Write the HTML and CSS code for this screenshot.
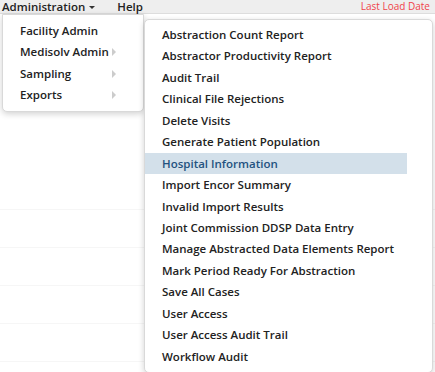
FILE: index.html
```html
<!DOCTYPE html>
<html>
<head>
<meta charset="utf-8">
<link rel="stylesheet" href="styles.css">
</head>
<body>
<div class="page">
  <header class="topbar">
    <nav class="nav">
      <span class="nav-item">Administration<span class="caret"></span></span>
      <span class="nav-item help">Help</span>
    </nav>
    <span class="last-load">Last Load Date</span>
  </header>
  <div class="content">
    <div class="row"></div>
    <div class="row"></div>
    <div class="row"></div>
    <div class="row"></div>
    <div class="row"></div>
  </div>

  <ul class="menu menu-main">
    <li class="item">Facility Admin</li>
    <li class="item sub">Medisolv Admin<span class="arrow"></span></li>
    <li class="item sub">Sampling<span class="arrow"></span></li>
    <li class="item sub">Exports<span class="arrow"></span></li>
  </ul>

  <ul class="menu menu-sub">
    <li class="item">Abstraction Count Report</li>
    <li class="item">Abstractor Productivity Report</li>
    <li class="item">Audit Trail</li>
    <li class="item">Clinical File Rejections</li>
    <li class="item">Delete Visits</li>
    <li class="item">Generate Patient Population</li>
    <li class="item active">Hospital Information</li>
    <li class="item">Import Encor Summary</li>
    <li class="item">Invalid Import Results</li>
    <li class="item">Joint Commission DDSP Data Entry</li>
    <li class="item">Manage Abstracted Data Elements Report</li>
    <li class="item">Mark Period Ready For Abstraction</li>
    <li class="item">Save All Cases</li>
    <li class="item">User Access</li>
    <li class="item">User Access Audit Trail</li>
    <li class="item">Workflow Audit</li>
  </ul>
</div>
</body>
</html>
```
FILE: styles.css
```css
html, body {
  margin: 0;
  padding: 0;
  background: #ffffff;
}
body {
  font-family: "Open Sans", "Liberation Sans", sans-serif;
  color: #333333;
  width: 435px;
  height: 372px;
  overflow: hidden;
}
.page {
  position: relative;
  width: 435px;
  height: 372px;
  overflow: hidden;
}
.topbar {
  height: 13px;
  background: #eeeeee;
  border-bottom: 1px solid #dddddd;
  display: flex;
  justify-content: space-between;
  align-items: flex-start;
}
.nav {
  display: flex;
  padding-left: 2px;
}
.nav-item {
  font-size: 11.5px;
  line-height: 13px;
  font-weight: 600;
  color: #222222;
  display: flex;
  align-items: center;
}
.caret {
  width: 0;
  height: 0;
  border-left: 3px solid transparent;
  border-right: 3px solid transparent;
  border-top: 3px solid #333;
  margin-left: 4px;
  margin-top: 2px;
}
.help {
  margin-left: 22px;
}
.last-load {
  font-size: 10px;
  line-height: 13px;
  color: #f0424a;
  padding-right: 5px;
}
.content {
  padding-top: 158px;
}
.row {
  height: 37px;
  border-bottom: 1px solid #f6f6f6;
}
.menu {
  position: absolute;
  margin: 0;
  list-style: none;
  background: #ffffff;
  border: 1px solid #d9d9d9;
  border-radius: 0 0 5px 5px;
  box-shadow: 0 2px 6px rgba(0, 0, 0, 0.18);
  box-sizing: border-box;
}
.menu-main {
  left: 2px;
  top: 14px;
  width: 142px;
  padding: 5px 0 5px 0;
}
.menu-sub {
  left: 144px;
  top: 19px;
  width: 289px;
  padding: 4px 25px 5px 0;
  border-radius: 5px;
  z-index: 2;
}
.item {
  height: 21.45px;
  line-height: 21.45px;
  font-size: 11.5px;
  font-weight: 600;
  color: #222222;
  white-space: nowrap;
  display: flex;
  align-items: center;
}
.menu-main .item {
  padding-left: 17px;
}
.menu-sub .item {
  padding-left: 17px;
}
.item.active {
  background: #d3e0ea;
  color: #24527f;
}
.arrow {
  width: 0;
  height: 0;
  border-top: 4px solid transparent;
  border-bottom: 4px solid transparent;
  border-left: 4px solid #cccccc;
  margin-left: auto;
  margin-right: 27px;
}
```
